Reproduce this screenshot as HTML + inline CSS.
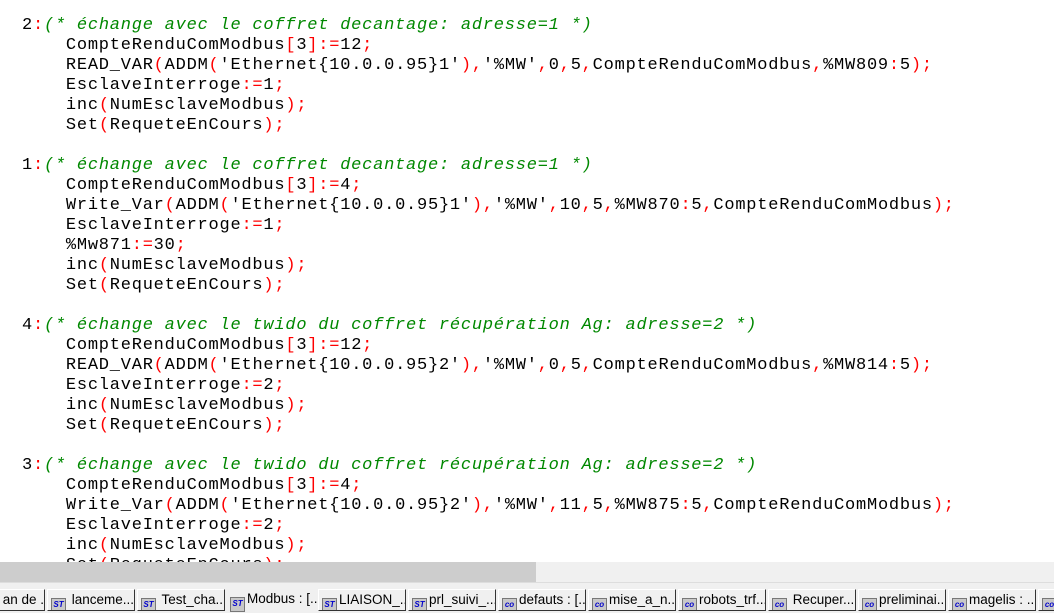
<!DOCTYPE html><html><head><style>
body{margin:0;width:1054px;height:612px;overflow:hidden;background:#fff;position:relative;font-family:"Liberation Sans",sans-serif}
#code{position:absolute;left:0;top:0;width:1054px;height:562px;overflow:hidden}
pre{margin:0;position:absolute;left:22px;top:16px;font-family:"Liberation Mono",monospace;font-size:17px;letter-spacing:0.77px;line-height:20px;color:#000}
.r{color:#f00}.g{color:#080;font-style:italic}
#sb{position:absolute;top:562px;left:0;width:1054px;height:20px;background:#f0f0f0}
#th{position:absolute;left:0;top:0;width:536px;height:20px;background:#cdcdcd}
#tabs{position:absolute;top:582px;left:0;width:1054px;height:30px;background:#f0f0f0;border-top:1px solid #ddd}
.t{position:absolute;top:6px;height:22px;background:#f0f0f0;font-size:13.5px;line-height:20px;white-space:nowrap;overflow:hidden;box-sizing:border-box;border-top:1px solid #fff;border-left:1px solid #fff;border-right:1px solid #333;border-bottom:1px solid #333}
.t.a{top:4px;height:26px;border:none;line-height:24px}
.i{display:inline-block;width:13px;height:13px;background:#c8c8c8;border:1px solid #777;vertical-align:-3px;margin:0 2px 0 3px;font-size:8px;line-height:12px;color:#00c;font-weight:bold;text-align:center;font-style:italic}
</style></head><body>
<div id="code"><pre>2<span class="r">:</span><span class="g">(* échange avec le coffret decantage: adresse=1 *)</span>
    CompteRenduComModbus<span class="r">[</span>3<span class="r">]:=</span>12<span class="r">;</span>
    READ_VAR<span class="r">(</span>ADDM<span class="r">(</span>'Ethernet{10.0.0.95}1'<span class="r">),</span>'%MW'<span class="r">,</span>0<span class="r">,</span>5<span class="r">,</span>CompteRenduComModbus<span class="r">,</span>%MW809<span class="r">:</span>5<span class="r">);</span>
    EsclaveInterroge<span class="r">:=</span>1<span class="r">;</span>
    inc<span class="r">(</span>NumEsclaveModbus<span class="r">);</span>
    Set<span class="r">(</span>RequeteEnCours<span class="r">);</span>

1<span class="r">:</span><span class="g">(* échange avec le coffret decantage: adresse=1 *)</span>
    CompteRenduComModbus<span class="r">[</span>3<span class="r">]:=</span>4<span class="r">;</span>
    Write_Var<span class="r">(</span>ADDM<span class="r">(</span>'Ethernet{10.0.0.95}1'<span class="r">),</span>'%MW'<span class="r">,</span>10<span class="r">,</span>5<span class="r">,</span>%MW870<span class="r">:</span>5<span class="r">,</span>CompteRenduComModbus<span class="r">);</span>
    EsclaveInterroge<span class="r">:=</span>1<span class="r">;</span>
    %Mw871<span class="r">:=</span>30<span class="r">;</span>
    inc<span class="r">(</span>NumEsclaveModbus<span class="r">);</span>
    Set<span class="r">(</span>RequeteEnCours<span class="r">);</span>

4<span class="r">:</span><span class="g">(* échange avec le twido du coffret récupération Ag: adresse=2 *)</span>
    CompteRenduComModbus<span class="r">[</span>3<span class="r">]:=</span>12<span class="r">;</span>
    READ_VAR<span class="r">(</span>ADDM<span class="r">(</span>'Ethernet{10.0.0.95}2'<span class="r">),</span>'%MW'<span class="r">,</span>0<span class="r">,</span>5<span class="r">,</span>CompteRenduComModbus<span class="r">,</span>%MW814<span class="r">:</span>5<span class="r">);</span>
    EsclaveInterroge<span class="r">:=</span>2<span class="r">;</span>
    inc<span class="r">(</span>NumEsclaveModbus<span class="r">);</span>
    Set<span class="r">(</span>RequeteEnCours<span class="r">);</span>

3<span class="r">:</span><span class="g">(* échange avec le twido du coffret récupération Ag: adresse=2 *)</span>
    CompteRenduComModbus<span class="r">[</span>3<span class="r">]:=</span>4<span class="r">;</span>
    Write_Var<span class="r">(</span>ADDM<span class="r">(</span>'Ethernet{10.0.0.95}2'<span class="r">),</span>'%MW'<span class="r">,</span>11<span class="r">,</span>5<span class="r">,</span>%MW875<span class="r">:</span>5<span class="r">,</span>CompteRenduComModbus<span class="r">);</span>
    EsclaveInterroge<span class="r">:=</span>2<span class="r">;</span>
    inc<span class="r">(</span>NumEsclaveModbus<span class="r">);</span>
    Set<span class="r">(</span>RequeteEnCours<span class="r">);</span></pre></div>
<div id="sb"><div id="th"></div></div>
<div id="tabs">
<div class="t" style="left:-2px;width:47px">&nbsp;an de ...</div>
<div class="t" style="left:47px;width:88px"><span class="i">ST</span> lanceme...</div>
<div class="t" style="left:137px;width:88px"><span class="i">ST</span> Test_cha...</div>
<div class="t a" style="left:227px;width:90px"><span class="i">ST</span>Modbus : [...</div>
<div class="t" style="left:318px;width:88px"><span class="i">ST</span>LIAISON_...</div>
<div class="t" style="left:408px;width:88px"><span class="i">ST</span>prl_suivi_...</div>
<div class="t" style="left:498px;width:88px"><span class="i">co</span>defauts : [...</div>
<div class="t" style="left:588px;width:88px"><span class="i">co</span>mise_a_n...</div>
<div class="t" style="left:678px;width:88px"><span class="i">co</span>robots_trf...</div>
<div class="t" style="left:768px;width:88px"><span class="i">co</span> Recuper...</div>
<div class="t" style="left:858px;width:88px"><span class="i">co</span>preliminai...</div>
<div class="t" style="left:948px;width:88px"><span class="i">co</span>magelis : ...</div>
<div class="t" style="left:1038px;width:30px"><span class="i">co</span></div>
</div>
</body></html>
